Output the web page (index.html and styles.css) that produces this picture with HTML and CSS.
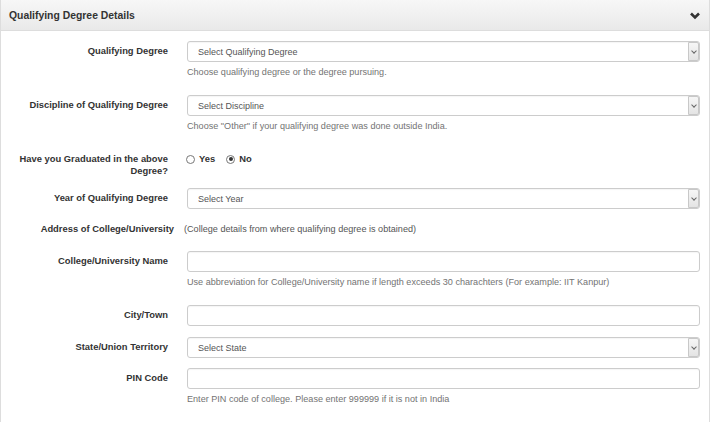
FILE: index.html
```html
<!DOCTYPE html>
<html lang="en">

<head>
    <meta charset="UTF-8">
    <meta name="viewport" content="width=device-width, initial-scale=1.0">
    <title>Qualifying Degree Details</title>
    <link rel="stylesheet" href="styles.css">
</head>

<body>
    <div class="panel">
        <div class="panel-heading">
            <span class="panel-title">Qualifying Degree Details</span>
            <svg class="toggle" width="10" height="8" viewBox="0 0 10 8">
                <path d="M1 1.5 L5 5.5 L9 1.5" fill="none" stroke="#333" stroke-width="2.6" />
            </svg>
        </div>
        <form class="panel-body">
            <div class="form-group">
                <label class="control-label">Qualifying Degree</label>
                <div class="controls">
                    <div class="select-wrap">
                        <select class="form-control">
                            <option>Select Qualifying Degree</option>
                        </select>
                        <span class="select-arrow"></span>
                    </div>
                    <p class="help-block">Choose qualifying degree or the degree pursuing.</p>
                </div>
            </div>
            <div class="form-group">
                <label class="control-label">Discipline of Qualifying Degree</label>
                <div class="controls">
                    <div class="select-wrap">
                        <select class="form-control">
                            <option>Select Discipline</option>
                        </select>
                        <span class="select-arrow"></span>
                    </div>
                    <p class="help-block">Choose "Other" if your qualifying degree was done outside India.</p>
                </div>
            </div>
            <div class="form-group radio-group">
                <label class="control-label">Have you Graduated in the above Degree?</label>
                <div class="controls radios">
                    <label class="radio"><input type="radio" name="graduated"> Yes</label>
                    <label class="radio"><input type="radio" name="graduated" checked> No</label>
                </div>
            </div>
            <div class="form-group">
                <label class="control-label">Year of Qualifying Degree</label>
                <div class="controls">
                    <div class="select-wrap">
                        <select class="form-control">
                            <option>Select Year</option>
                        </select>
                        <span class="select-arrow"></span>
                    </div>
                </div>
            </div>
            <div class="form-group address-group">
                <label class="control-label wide">Address of College/University</label>
                <div class="note">(College details from where qualifying degree is obtained)</div>
            </div>
            <div class="form-group">
                <label class="control-label">College/University Name</label>
                <div class="controls">
                    <input type="text" class="form-control">
                    <p class="help-block">Use abbreviation for College/University name if length exceeds 30 charachters (For example: IIT Kanpur)</p>
                </div>
            </div>
            <div class="form-group">
                <label class="control-label">City/Town</label>
                <div class="controls">
                    <input type="text" class="form-control">
                </div>
            </div>
            <div class="form-group tight">
                <label class="control-label">State/Union Territory</label>
                <div class="controls">
                    <div class="select-wrap">
                        <select class="form-control">
                            <option>Select State</option>
                        </select>
                        <span class="select-arrow"></span>
                    </div>
                </div>
            </div>
            <div class="form-group">
                <label class="control-label">PIN Code</label>
                <div class="controls">
                    <input type="text" class="form-control">
                    <p class="help-block">Enter PIN code of college. Please enter 999999 if it is not in India</p>
                </div>
            </div>
        </form>
    </div>
</body>

</html>
```

FILE: styles.css
```css
body {
    margin: 0;
    background-color: #ffffff;
    font-family: "Liberation Sans", Arial, sans-serif;
    color: #333333;
}

.panel {
    width: 708px;
    border: 1px solid #dddddd;
    border-top: none;
    min-height: 440px;
    background-color: #ffffff;
}

.panel-heading {
    height: 31px;
    display: flex;
    align-items: center;
    justify-content: space-between;
    padding: 0 9px 0 8px;
    background: linear-gradient(to bottom, #f7f7f7, #e9e9e9);
    border-bottom: 1px solid #dddddd;
    box-sizing: border-box;
}

.panel-title {
    font-size: 10.4px;
    font-weight: bold;
    color: #333333;
}

.toggle {
    margin-top: 1px;
}

.panel-body {
    padding: 10px 9px 0 0;
    margin: 0;
}

.form-group {
    display: grid;
    grid-template-columns: 167px 1fr;
    column-gap: 19px;
    margin-bottom: 11px;
}

.form-group.tight {
    margin-bottom: 10px;
}

.control-label {
    text-align: right;
    font-weight: bold;
    font-size: 9.4px;
    line-height: 12px;
    padding-top: 4px;
}

.form-control {
    display: block;
    width: 100%;
    height: 21px;
    box-sizing: border-box;
    border: 1px solid #cccccc;
    border-radius: 3px;
    background-color: #ffffff;
    padding: 0 10px;
    font-family: "Liberation Sans", Arial, sans-serif;
    font-size: 9px;
    color: #555555;
    box-shadow: inset 0 1px 1px rgba(0, 0, 0, 0.04);
    appearance: none;
    outline: none;
}

.select-wrap {
    position: relative;
}

/* old style dropdown button drawn over the select */
.select-arrow {
    position: absolute;
    top: 1px;
    right: 1px;
    width: 11px;
    height: 19px;
    box-sizing: border-box;
    border: 1px solid #c8c8c8;
    border-radius: 0 2px 2px 0;
    background: linear-gradient(to bottom, #f6f6f6, #e4e4e4);
}

.select-arrow::after {
    content: "";
    position: absolute;
    left: 3px;
    top: 6px;
    width: 3px;
    height: 3px;
    border-right: 1px solid #666666;
    border-bottom: 1px solid #666666;
    transform: rotate(45deg);
}

.help-block {
    margin: 4px 0 6px;
    font-size: 9.1px;
    line-height: 12px;
    color: #737373;
}

.radio-group {
    padding-top: 4px;
}

.radio-group .control-label {
    padding-top: 0;
}

.radios {
    display: flex;
    gap: 12px;
    align-items: flex-start;
}

.radio {
    display: flex;
    align-items: center;
    gap: 4px;
    font-size: 9.4px;
    font-weight: bold;
    line-height: 12px;
}

.radio input {
    appearance: none;
    margin: 0 0 0 -1px;
    width: 9px;
    height: 9px;
    border: 1px solid #777777;
    border-radius: 50%;
    background-color: #ffffff;
    position: relative;
}

.radio input:checked::after {
    content: "";
    position: absolute;
    left: 1.5px;
    top: 1.5px;
    width: 4px;
    height: 4px;
    border-radius: 50%;
    background-color: #333333;
}

.address-group {
    column-gap: 10px;
    grid-template-columns: 173px 1fr;
    padding-top: 3px;
    margin-bottom: 16px;
}

.address-group .control-label {
    padding-top: 0;
}

.note {
    font-size: 9.1px;
    line-height: 12px;
    color: #555555;
}
```
